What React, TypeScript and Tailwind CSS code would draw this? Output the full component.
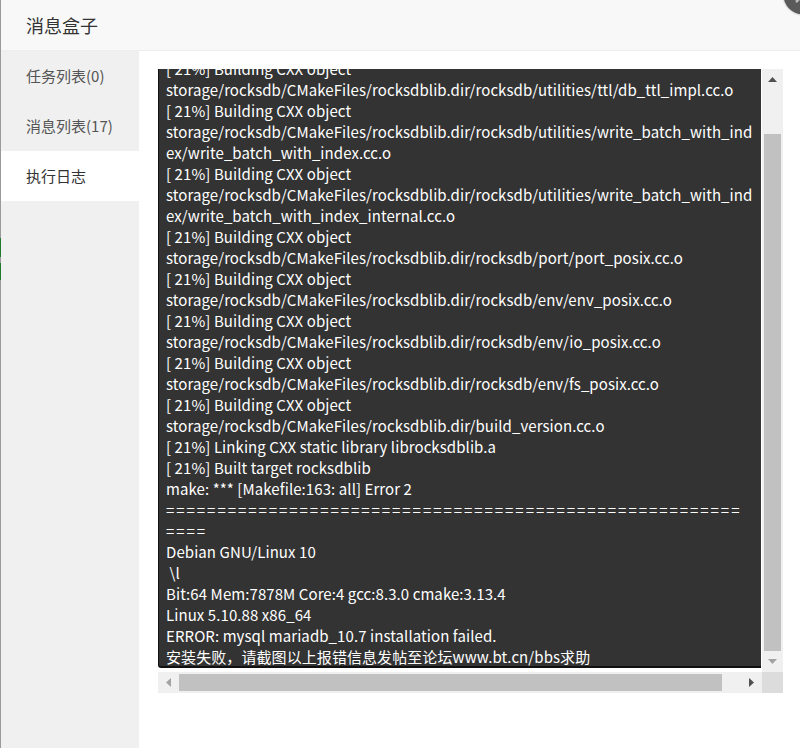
import React from "react";

const LOG: string[] = [
  "storage/rocksdb/CMakeFiles/rocksdblib.dir/rocksdb/utilities/table_properties_col",
  "lectors/compact_on_deletion_collector.cc.o",
  "[ 21%] Building CXX object",
  "storage/rocksdb/CMakeFiles/rocksdblib.dir/rocksdb/utilities/ttl/db_ttl_impl.cc.o",
  "[ 21%] Building CXX object",
  "storage/rocksdb/CMakeFiles/rocksdblib.dir/rocksdb/utilities/write_batch_with_ind",
  "ex/write_batch_with_index.cc.o",
  "[ 21%] Building CXX object",
  "storage/rocksdb/CMakeFiles/rocksdblib.dir/rocksdb/utilities/write_batch_with_ind",
  "ex/write_batch_with_index_internal.cc.o",
  "[ 21%] Building CXX object",
  "storage/rocksdb/CMakeFiles/rocksdblib.dir/rocksdb/port/port_posix.cc.o",
  "[ 21%] Building CXX object",
  "storage/rocksdb/CMakeFiles/rocksdblib.dir/rocksdb/env/env_posix.cc.o",
  "[ 21%] Building CXX object",
  "storage/rocksdb/CMakeFiles/rocksdblib.dir/rocksdb/env/io_posix.cc.o",
  "[ 21%] Building CXX object",
  "storage/rocksdb/CMakeFiles/rocksdblib.dir/rocksdb/env/fs_posix.cc.o",
  "[ 21%] Building CXX object",
  "storage/rocksdb/CMakeFiles/rocksdblib.dir/build_version.cc.o",
  "[ 21%] Linking CXX static library librocksdblib.a",
  "[ 21%] Built target rocksdblib",
  "make: *** [Makefile:163: all] Error 2",
  "EQ56",
  "EQ4",
  "Debian GNU/Linux 10",
  " \\l",
  "Bit:64 Mem:7878M Core:4 gcc:8.3.0 cmake:3.13.4",
  "Linux 5.10.88 x86_64",
  "ERROR: mysql mariadb_10.7 installation failed.",
  "安装失败，请截图以上报错信息发帖至论坛www.bt.cn/bbs求助",
];

function LogLine({ text }: { text: string }) {
  if (text === "EQ56") {
    return (
      <div className="h-[21px] leading-[21px] whitespace-nowrap tracking-[1.95px]">
        {"=".repeat(56)}
      </div>
    );
  }
  if (text === "EQ4") {
    return (
      <div className="h-[21px] leading-[21px] whitespace-nowrap tracking-[1.95px]">
        {"=".repeat(4)}
      </div>
    );
  }
  return <div className="h-[21px] leading-[21px] whitespace-pre tracking-[0.08px]">{text}</div>;
}

export default function App() {
  return (
    <div
      className="relative flex w-[800px] h-[748px] bg-white overflow-hidden"
      style={{ fontFamily: '"Noto Sans CJK SC", "Noto Sans", sans-serif' }}
    >
      {/* left edge strip */}
      <div className="flex w-px flex-col bg-[#9a9a9a]">
        <div className="h-[238px]" />
        <div className="h-[19px] bg-[#1f7a2e]" />
        <div className="h-[6px]" />
        <div className="h-[17px] bg-[#1f7a2e]" />
      </div>

      <div className="flex flex-1 flex-col">
        {/* header */}
        <div className="flex h-[51px] items-center border-b border-[#eeeeee] bg-[#f8f8f8] pl-[25px] text-[18px] text-[#333333]">
          消息盒子
        </div>

        <div className="flex flex-1">
          {/* sidebar */}
          <div className="flex w-[138px] flex-col bg-[#f0f0f0] text-[15px] text-[#555555]">
            <div className="flex h-[50px] items-center pl-[25px]">任务列表(0)</div>
            <div className="flex h-[50px] items-center pl-[25px]">消息列表(17)</div>
            <div className="flex h-[50px] items-center bg-white pl-[25px] text-[#333333]">执行日志</div>
          </div>

          {/* content */}
          <div className="flex-1 bg-white pl-[19px] pt-[18px]">
            <div className="flex w-[625px] flex-col">
              <div className="flex">
                <div className="h-[603px] w-[604px]">
                  <div className="flex h-[599px] w-[603px] flex-col justify-end overflow-hidden rounded-bl-[3px] border-b-2 border-l border-[#111111] bg-[#333333] pl-[7px] text-[15px] text-white">
                    <div className="-mb-px">
                      {LOG.map((l, i) => (
                        <LogLine key={i} text={l} />
                      ))}
                    </div>
                  </div>
                </div>
                {/* vertical scrollbar */}
                <div className="flex h-[603px] w-[21px] flex-col bg-[#f0f0f0]">
                  <div className="flex h-[21px] items-center justify-center">
                    <svg width="9" height="5" viewBox="0 0 9 5">
                      <path d="M0 5 L4.5 0 L9 5 Z" fill="#505050" />
                    </svg>
                  </div>
                  <div className="h-[44px]" />
                  <div className="mx-[2px] h-[517px] bg-[#c1c1c1]" />
                  <div className="flex-1" />
                  <div className="flex h-[21px] items-center justify-center">
                    <svg width="9" height="5" viewBox="0 0 9 5">
                      <path d="M0 0 L9 0 L4.5 5 Z" fill="#a3a3a3" />
                    </svg>
                  </div>
                </div>
              </div>
              <div className="flex">
                {/* horizontal scrollbar */}
                <div className="flex h-[21px] w-[604px] bg-[#f0f0f0]">
                  <div className="flex w-[21px] items-center justify-center">
                    <svg width="5" height="9" viewBox="0 0 5 9">
                      <path d="M5 0 L5 9 L0 4.5 Z" fill="#a3a3a3" />
                    </svg>
                  </div>
                  <div className="my-[2px] w-[543px] bg-[#c1c1c1]" />
                  <div className="flex-1" />
                  <div className="flex w-[21px] items-center justify-center">
                    <svg width="5" height="9" viewBox="0 0 5 9">
                      <path d="M0 0 L5 4.5 L0 9 Z" fill="#505050" />
                    </svg>
                  </div>
                </div>
                <div className="h-[21px] w-[21px] bg-[#dcdcdc]" />
              </div>
            </div>
          </div>
        </div>
      </div>

      {/* close button */}
      <svg
        className="absolute left-[781px] top-[-27px]"
        width="44"
        height="44"
        viewBox="0 0 44 44"
      >
        <circle cx="22" cy="22" r="21" fill="#e6e6e6" />
        <circle cx="22" cy="22" r="19.5" fill="#5a5a5a" />
        <path d="M15 15 L29 29 M29 15 L15 29" stroke="#bdbdbd" strokeWidth="2.5" />
      </svg>
    </div>
  );
}
